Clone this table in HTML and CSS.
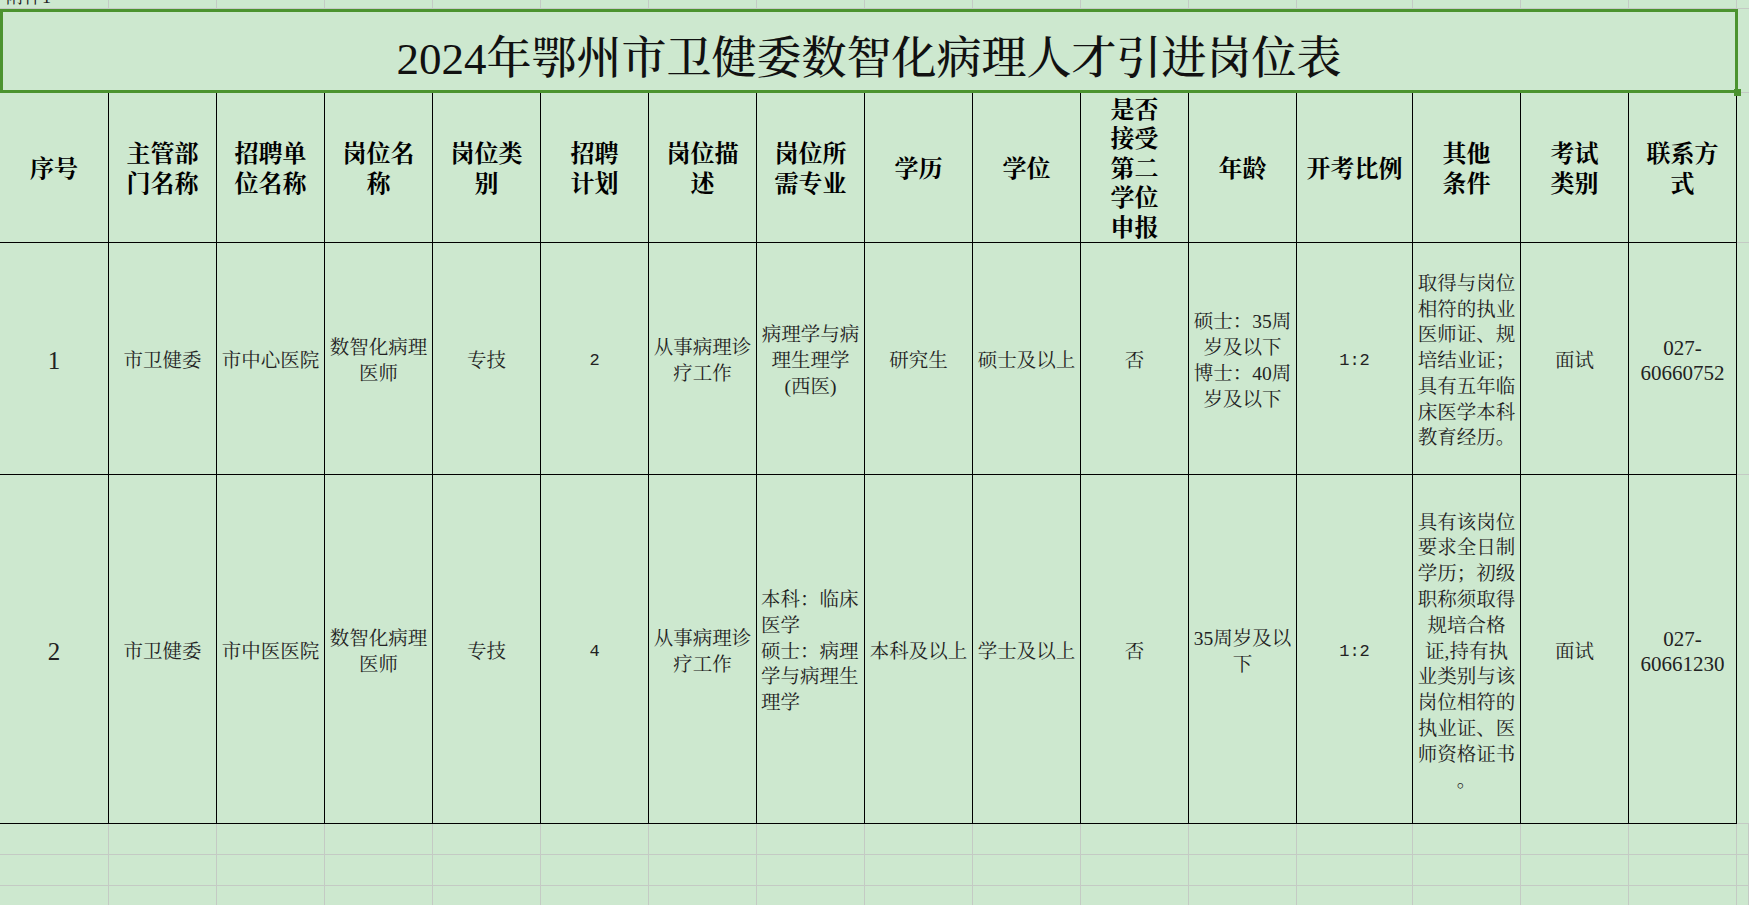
FILE: index.html
```html
<!DOCTYPE html>
<html lang="zh-CN">
<head>
<meta charset="utf-8">
<title>2024年鄂州市卫健委数智化病理人才引进岗位表</title>
<link rel="stylesheet" href="styles.css">
</head>
<body>
<div class="sheet">
  <div class="cols strip">
    <div class="g"><div class="note">附件1</div></div>
    <div class="g"></div><div class="g"></div><div class="g"></div><div class="g"></div>
    <div class="g"></div><div class="g"></div><div class="g"></div><div class="g"></div>
    <div class="g"></div><div class="g"></div><div class="g"></div><div class="g"></div>
    <div class="g"></div><div class="g"></div><div class="g"></div><div class="gf"></div>
  </div>

  <div class="titlerow">
    <div class="title">2024年鄂州市卫健委数智化病理人才引进岗位表<span class="handle"></span></div>
    <div class="titlefill"></div>
  </div>

  <div class="cols table">
    <div class="c h">序号</div>
    <div class="c h">主管部<br>门名称</div>
    <div class="c h">招聘单<br>位名称</div>
    <div class="c h">岗位名<br>称</div>
    <div class="c h">岗位类<br>别</div>
    <div class="c h">招聘<br>计划</div>
    <div class="c h">岗位描<br>述</div>
    <div class="c h">岗位所<br>需专业</div>
    <div class="c h">学历</div>
    <div class="c h">学位</div>
    <div class="c h">是否<br>接受<br>第二<br>学位<br>申报</div>
    <div class="c h">年龄</div>
    <div class="c h">开考比例</div>
    <div class="c h">其他<br>条件</div>
    <div class="c h">考试<br>类别</div>
    <div class="c h">联系方<br>式</div>
    <div class="f"></div>

    <div class="c d num">1</div>
    <div class="c d">市卫健委</div>
    <div class="c d">市中心医院</div>
    <div class="c d">数智化病理<br>医师</div>
    <div class="c d">专技</div>
    <div class="c d mono">2</div>
    <div class="c d">从事病理诊<br>疗工作</div>
    <div class="c d">病理学与病<br>理生理学<br>(西医)</div>
    <div class="c d">研究生</div>
    <div class="c d">硕士及以上</div>
    <div class="c d">否</div>
    <div class="c d">硕士：35周<br>岁及以下<br>博士：40周<br>岁及以下</div>
    <div class="c d mono">1:2</div>
    <div class="c d">取得与岗位<br>相符的执业<br>医师证、规<br>培结业证；<br>具有五年临<br>床医学本科<br>教育经历。</div>
    <div class="c d">面试</div>
    <div class="c d tel">027-<br>60660752</div>
    <div class="f"></div>

    <div class="c d num">2</div>
    <div class="c d">市卫健委</div>
    <div class="c d">市中医医院</div>
    <div class="c d">数智化病理<br>医师</div>
    <div class="c d">专技</div>
    <div class="c d mono">4</div>
    <div class="c d">从事病理诊<br>疗工作</div>
    <div class="c d left">本科：临床<br>医学<br>硕士：病理<br>学与病理生<br>理学</div>
    <div class="c d">本科及以上</div>
    <div class="c d">学士及以上</div>
    <div class="c d">否</div>
    <div class="c d">35周岁及以<br>下</div>
    <div class="c d mono">1:2</div>
    <div class="c d">具有该岗位<br>要求全日制<br>学历；初级<br>职称须取得<br>规培合格<br>证,持有执<br>业类别与该<br>岗位相符的<br>执业证、医<br>师资格证书<br>。</div>
    <div class="c d">面试</div>
    <div class="c d tel">027-<br>60661230</div>
    <div class="f"></div>
  </div>

  <div class="cols empty">
    <div class="g"></div><div class="g"></div><div class="g"></div><div class="g"></div>
    <div class="g"></div><div class="g"></div><div class="g"></div><div class="g"></div>
    <div class="g"></div><div class="g"></div><div class="g"></div><div class="g"></div>
    <div class="g"></div><div class="g"></div><div class="g"></div><div class="g"></div><div class="g"></div>
    <div class="g"></div><div class="g"></div><div class="g"></div><div class="g"></div>
    <div class="g"></div><div class="g"></div><div class="g"></div><div class="g"></div>
    <div class="g"></div><div class="g"></div><div class="g"></div><div class="g"></div>
    <div class="g"></div><div class="g"></div><div class="g"></div><div class="g"></div><div class="g"></div>
    <div class="g"></div><div class="g"></div><div class="g"></div><div class="g"></div>
    <div class="g"></div><div class="g"></div><div class="g"></div><div class="g"></div>
    <div class="g"></div><div class="g"></div><div class="g"></div><div class="g"></div>
    <div class="g"></div><div class="g"></div><div class="g"></div><div class="g"></div><div class="g"></div>
  </div>
</div>
</body>
</html>
```

FILE: styles.css
```css
* {
  box-sizing: border-box;
  margin: 0;
  padding: 0;
}

html, body {
  background: #cde8cf;
}

body {
  margin: 0;
  width: 1749px;
  height: 905px;
  overflow: hidden;
  font-family: "Liberation Serif", "Noto Serif CJK SC", "Noto Sans CJK SC", serif;
  color: #1e1e1e;
}

.sheet {
  width: 1749px;
}

.cols {
  display: grid;
  grid-template-columns: 109px repeat(11, 108px) 116px repeat(3, 108px) 12px;
}

/* top strip with cut-off "附件1" */
.strip {
  height: 9px;
  overflow: hidden;
}

.g {
  border-right: 1px solid #c4cac4;
  border-bottom: 1px solid #c4cac4;
}

.gf {
  border-bottom: 1px solid #c4cac4;
}

.note {
  font-size: 18px;
  line-height: 18px;
  margin-top: -12px;
  padding-left: 6px;
  white-space: nowrap;
  color: #222;
}

/* title */
.titlerow {
  display: flex;
  height: 84px;
}

.title {
  position: relative;
  width: 1738px;
  height: 84px;
  border: 3px solid #4b932f;
  display: flex;
  align-items: center;
  justify-content: center;
  padding-top: 6px;
  font-size: 45px;
  font-weight: 500;
  color: #111;
  white-space: nowrap;
}

.handle {
  position: absolute;
  right: -6px;
  bottom: -6px;
  width: 7px;
  height: 7px;
  background: #4b932f;
}

.titlefill {
  flex: 1;
  border-bottom: 1px solid #c4cac4;
}

/* table */
.table {
  grid-template-rows: 150px 232px 349px;
}

.c {
  border-right: 1px solid #000;
  border-bottom: 1px solid #000;
  display: flex;
  align-items: center;
  justify-content: center;
  text-align: center;
  white-space: nowrap;
}

.f {
  border-bottom: 1px solid #c4cac4;
}

.h {
  font-size: 24px;
  line-height: 29.5px;
  font-weight: 700;
  color: #000;
  padding-top: 4px;
}

.d {
  font-size: 19.5px;
  line-height: 25.8px;
  color: #222;
  padding-top: 5px;
}

.d.left {
  justify-content: flex-start;
  text-align: left;
  padding-left: 4px;
}

.num {
  font-size: 25px;
}

.mono {
  font-family: "Liberation Mono", "DejaVu Sans Mono", monospace;
  font-size: 17px;
}

.tel {
  font-size: 21px;
  line-height: 25px;
}

/* empty spreadsheet rows below */
.empty {
  grid-template-rows: 31px 31px 31px;
}
```
